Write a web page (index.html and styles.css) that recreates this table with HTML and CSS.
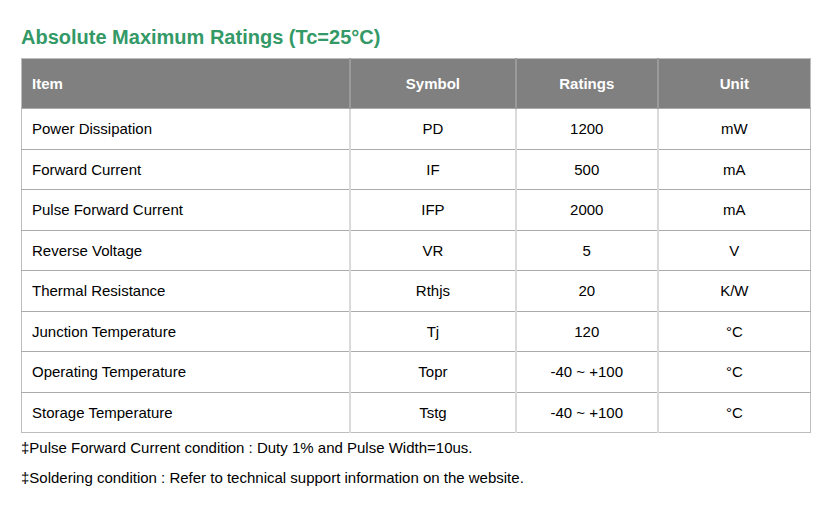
FILE: index.html
```html
<!DOCTYPE html>
<html>
<head>
<meta charset="utf-8">
<link rel="stylesheet" href="styles.css">
</head>
<body>
<div class="page">
  <h2 class="title">Absolute Maximum Ratings (Tc=25°C)</h2>
  <table class="ratings">
    <colgroup>
      <col class="c-item"><col class="c-sym"><col class="c-rat"><col class="c-unit">
    </colgroup>
    <thead>
      <tr><th class="left">Item</th><th>Symbol</th><th>Ratings</th><th>Unit</th></tr>
    </thead>
    <tbody>
      <tr><td class="left">Power Dissipation</td><td>PD</td><td>1200</td><td>mW</td></tr>
      <tr><td class="left">Forward Current</td><td>IF</td><td>500</td><td>mA</td></tr>
      <tr><td class="left">Pulse Forward Current</td><td>IFP</td><td>2000</td><td>mA</td></tr>
      <tr><td class="left">Reverse Voltage</td><td>VR</td><td>5</td><td>V</td></tr>
      <tr><td class="left">Thermal Resistance</td><td>Rthjs</td><td>20</td><td>K/W</td></tr>
      <tr><td class="left">Junction Temperature</td><td>Tj</td><td>120</td><td>°C</td></tr>
      <tr><td class="left">Operating Temperature</td><td>Topr</td><td>-40 ~ +100</td><td>°C</td></tr>
      <tr><td class="left">Storage Temperature</td><td>Tstg</td><td>-40 ~ +100</td><td>°C</td></tr>
    </tbody>
  </table>
  <div class="notes">
    <div class="note">‡Pulse Forward Current condition : Duty 1% and Pulse Width=10us.</div>
    <div class="note">‡Soldering condition : Refer to technical support information on the website.</div>
  </div>
</div>
</body>
</html>
```
FILE: styles.css
```css
html, body {
  margin: 0;
  padding: 0;
  background: #ffffff;
}
body {
  font-family: "Liberation Sans", Arial, sans-serif;
  color: #000;
}
.page {
  padding: 25px 0 0 21px;
}
.title {
  margin: 0 0 9px 0;
  font-size: 20px;
  line-height: 24px;
  font-weight: bold;
  color: #339966;
}
.ratings {
  width: 790px;
  border-collapse: collapse;
  border: 1px solid #bdbdbd;
  font-size: 15px;
}
.c-item { width: 329px; }
.c-sym { width: 166px; }
.c-rat { width: 142px; }
.c-unit { width: 153px; }
.ratings th {
  background: #808080;
  color: #fff;
  font-weight: bold;
  height: 49px;
  padding: 0 10px;
  text-align: center;
  border-right: 2px solid #9a9a9a;
  border-bottom: 1px solid #aaaaaa;
}
.ratings td {
  height: 40.5px;
  padding: 0 10px;
  text-align: center;
  border-right: 2px solid #dadada;
  border-bottom: 1px solid #ababab;
  box-sizing: border-box;
}
.ratings th:last-child, .ratings td:last-child {
  border-right: 1px solid #bdbdbd;
}
.ratings tbody tr:last-child td {
  border-bottom: 1px solid #bdbdbd;
}
.ratings .left {
  text-align: left;
}
.notes {
  font-size: 15px;
  line-height: 30px;
}
```
